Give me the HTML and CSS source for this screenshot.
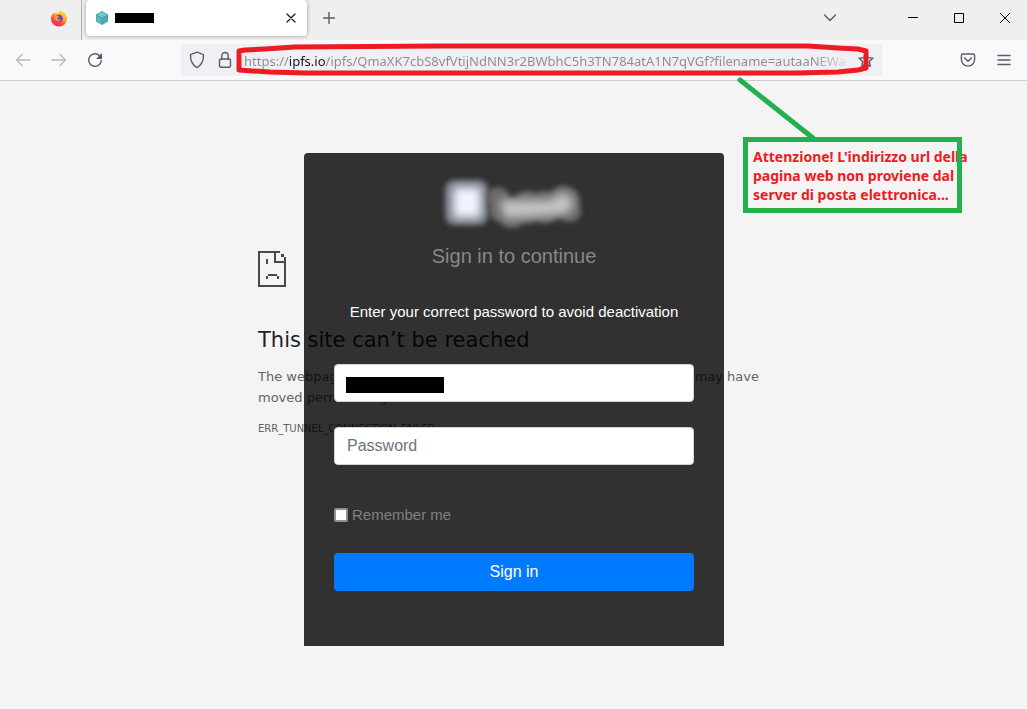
FILE: index.html
```
<!DOCTYPE html>
<html lang="en">
<head>
<meta charset="utf-8">
<title>Browser window</title>
<link rel="stylesheet" href="styles.css">
</head>
<body>
<header class="browser">
  <div class="tabbar">
    <div class="pinned">
      <svg width="18" height="18" viewBox="0 0 18 18" aria-hidden="true">
        <defs>
          <linearGradient id="fire" x1="0.8" y1="0" x2="0.25" y2="1">
            <stop offset="0" stop-color="#fff04a"/><stop offset="0.4" stop-color="#ffa726"/><stop offset="0.7" stop-color="#ff4a3d"/><stop offset="1" stop-color="#ec1675"/>
          </linearGradient>
        </defs>
        <path fill="url(#fire)" d="M10.5 1c.3 1.300 1.200 1.900 2 2.700.3-.4.300-.8.200-1.300C15.500 4 17 6.600 17 9.500A8 8 0 0 1 1 9.700C1 7.800 1.500 6 2.600 4.500l.3 1C3.200 4.400 3.900 3.500 4.800 3l.3 1.800c1-.5 2.200-.6 3.300-.3C8.600 3.100 9.300 1.900 10.500 1z"/>
        <circle cx="9" cy="9.500" r="3.800" fill="#7a3ae0"/>
        <path fill="#ff9b2d" d="M4.500 6.500c1.500-.6 2.500 0 3.200.8l1.500.2c0 .9-1.700 1-1.900 2 .3 1.500 2.700 1.800 4 .7-1 2.500-5 2.900-6.500.3-.7-1.200-.8-2.600-.3-4z"/>
      </svg>
    </div>
    <div class="tab">
      <svg width="14" height="16" viewBox="0 0 14 16" aria-hidden="true">
        <path fill="#469ea2" d="M7 1l6 3.500v7L7 15l-6-3.500v-7z"/>
        <path fill="#6acad1" d="M7 1.800l5.200 3L7 7.800l-5.200-3z"/>
        <path fill="#58b8be" d="M1.600 5.700l4.900 2.800v5.400l-4.900-2.800z"/>
        <path fill="#4fabb0" d="M12.400 5.700L7.500 8.500v5.400l4.900-2.800z"/>
      </svg>
      <span class="redacted-title"></span>
      <button class="icon-btn tab-close" aria-label="Close tab"><svg width="10" height="10" viewBox="0 0 10 10"><path d="M1 1l8 8M9 1L1 9"/></svg></button>
    </div>
    <button class="icon-btn new-tab" aria-label="New tab"><svg width="12" height="12" viewBox="0 0 12 12"><path d="M6 .5v11M.5 6h11"/></svg></button>
    <button class="icon-btn all-tabs" aria-label="List all tabs"><svg width="14" height="8" viewBox="0 0 14 8"><path d="M1.500 1L7 6.500 12.500 1"/></svg></button>
    <button class="win-btn" aria-label="Minimize"><svg width="10" height="10" viewBox="0 0 10 10"><path d="M0 4.500h10"/></svg></button>
    <button class="win-btn" aria-label="Maximize"><svg width="10" height="10" viewBox="0 0 10 10"><path d="M.5.5h9v9h-9z"/></svg></button>
    <button class="win-btn" aria-label="Close"><svg width="10" height="10" viewBox="0 0 10 10"><path d="M0 0l10 10M10 0L0 10"/></svg></button>
  </div>
  <div class="toolbar">
    <nav class="nav">
      <button class="icon-btn nav-btn" disabled aria-label="Back"><svg width="16" height="16" viewBox="0 0 16 16"><path d="M15 8H1.500M7 2.500L1.500 8 7 13.500"/></svg></button>
      <button class="icon-btn nav-btn" disabled aria-label="Forward"><svg width="16" height="16" viewBox="0 0 16 16"><path d="M1 8h13.500M9 2.500L14.500 8 9 13.500"/></svg></button>
      <button class="icon-btn nav-btn" aria-label="Reload"><svg width="16" height="16" viewBox="0 0 16 16"><path d="M13.200 4.500A6.300 6.300 0 1 0 14.300 8.500"/><path class="solid" d="M15 1v6H9z"/></svg></button>
    </nav>
    <div class="urlbar">
      <svg width="16" height="18" viewBox="0 0 16 18" aria-hidden="true"><path d="M8 1.200L14.500 3.600C14.700 9.500 12.800 14 8 16.700 3.200 14 1.300 9.500 1.500 3.600z"/></svg>
      <svg width="14" height="18" viewBox="0 0 14 18" aria-hidden="true"><rect x="1.500" y="8" width="11" height="8.300" rx="1.500"/><path d="M3.800 8V4.700a3.200 3.200 0 0 1 6.400 0V8"/></svg>
      <input class="url" type="text" aria-label="Address" spellcheck="false" value="https://ipfs.io/ipfs/QmaXK7cbS8vfVtijNdNN3r2BWbhC5h3TN784atA1N7qVGf?filename=autaaNEWa">
      <button class="icon-btn star" aria-label="Bookmark"><svg width="16" height="16" viewBox="0 0 16 16"><path d="M8 1.200l2 4.400 4.900.6-3.600 3.200 1 4.900L8 11.800l-4.300 2.500 1-4.900L1.100 6.200 6 5.600z"/></svg></button>
    </div>
    <div class="actions">
      <button class="icon-btn" aria-label="Pocket"><svg width="16" height="16" viewBox="0 0 16 16"><path d="M2.700 2h10.600a1.300 1.300 0 0 1 1.300 1.300v4.200a6.600 6.600 0 0 1-13.200 0V3.300A1.300 1.300 0 0 1 2.700 2z"/><path d="M4.500 6L8 9.300 11.500 6"/></svg></button>
      <button class="icon-btn" aria-label="Menu"><svg width="14" height="14" viewBox="0 0 14 14"><path d="M1 2.500h12M1 7h12M1 11.500h12"/></svg></button>
    </div>
  </div>
</header>

<main class="page">
  <section class="error">
    <svg class="error-icon" width="29" height="36" viewBox="0 0 29 36" aria-hidden="true">
      <path class="frame" d="M22 1H1v34h26V6M17 1v10h10"/>
      <path class="dots" d="M23 3h3v3h-3zM8 8h2v5H8zM10 23h9v2h-9zM8 25h2v3H8zM19 25h2v3h-2z"/>
    </svg>
    <h1>This site can’t be reached</h1>
    <p class="split"><span>The webpage</span><span>may have</span></p>
    <p>moved permanently</p>
    <p class="code">ERR_TUNNEL_CONNECTION_FAILED</p>
  </section>

  <form class="card">
    <svg class="logo" width="150" height="60" viewBox="0 0 150 60" aria-hidden="true">
      <defs>
        <filter id="soft" x="-20%" y="-30%" width="140%" height="160%"><feGaussianBlur stdDeviation="2.500"/></filter>
        <filter id="core" x="-40%" y="-60%" width="180%" height="220%"><feGaussianBlur stdDeviation="5"/></filter>
      </defs>
      <rect x="6" y="6" width="43" height="45" rx="9" fill="#737983" filter="url(#soft)"/>
      <rect x="14" y="13" width="28" height="31" fill="#f0f4ff" filter="url(#core)"/>
      <g fill="#6a6a6a" filter="url(#soft)">
        <circle cx="59" cy="24" r="11"/><circle cx="73" cy="39" r="15"/><circle cx="62" cy="36" r="12"/>
        <circle cx="89" cy="33" r="16"/><circle cx="106" cy="33" r="16"/><circle cx="125" cy="28" r="16"/><circle cx="131" cy="37" r="11"/>
      </g>
      <path fill="#c4c4c4" filter="url(#core)" d="M60 26l52 0 10-8 12 6-2 14-12 3-54 4z"/>
    </svg>
    <h2>Sign in to continue</h2>
    <p class="hint">Enter your correct password to avoid deactivation</p>
    <div class="field">
      <input type="text" aria-label="Account">
      <span class="redacted-value"></span>
    </div>
    <div class="field">
      <input type="password" placeholder="Password" aria-label="Password">
    </div>
    <label class="remember"><input type="checkbox">Remember me</label>
    <button class="submit" type="button">Sign in</button>
  </form>
</main>

<svg class="marks" width="1027" height="220" viewBox="0 0 1027 220" aria-hidden="true">
  <path class="mark-red" d="M239 70V51L245 50 265 49 295 47 440 46H808L838 48 858 49 866 51V68L858 70 838 72 796 73H307L270 72 252 71Z"/>
  <path class="mark-green" d="M740 80L813 138"/>
</svg>
<aside class="note" lang="it">Attenzione! L'indirizzo url della<br>pagina web non proviene dal<br>server di posta elettronica...</aside>
</body>
</html>
```
FILE: styles.css
```
* { box-sizing: border-box; }

body {
  margin: 0;
  min-height: 100vh;
  display: flex;
  flex-direction: column;
  position: relative;
  background: #f4f4f4;
  font-family: "Liberation Sans", Arial, sans-serif;
}

h1, h2, p { margin: 0; font-weight: 400; }

svg { display: block; flex: none; }

/* Browser chrome */
.tabbar {
  display: flex;
  height: 40px;
  background: #efefef;
}

.pinned {
  width: 82px;
  padding: 9px 0 0 50px;
  border-right: 1px solid #b0b0b0;
}

.tab {
  display: flex;
  align-items: center;
  gap: 6px;
  width: 221px;
  height: 36px;
  margin-left: 4px;
  padding: 0 8px 0 9px;
  background: #fff;
  border-radius: 4px;
  box-shadow: 0 0 4px rgba(0, 0, 0, 0.35);
}

.redacted-title {
  width: 39px;
  height: 10px;
  background: #000;
}

.icon-btn,
.win-btn {
  display: flex;
  align-items: center;
  justify-content: center;
  padding: 0;
  border: 0;
  background: none;
}

.icon-btn { width: 24px; height: 36px; }

.icon-btn svg,
.win-btn svg,
.urlbar > svg {
  fill: none;
  stroke: #5b5b66;
  stroke-width: 1.4;
  stroke-linejoin: round;
  stroke-linecap: round;
}

.tab-close { width: 16px; margin-left: auto; }
.tab-close svg { stroke: #15141a; stroke-width: 1.2; }
.new-tab { margin-left: 10px; }
.all-tabs { margin: 0 48px 0 auto; }

.win-btn { width: 46px; height: 36px; }
.win-btn:last-child { width: 45px; }
.win-btn svg { stroke: #000; stroke-width: 1; stroke-linecap: butt; stroke-linejoin: miter; }

.toolbar {
  display: flex;
  align-items: center;
  height: 41px;
  background: #f9f9fb;
  border-bottom: 1px solid #ccc;
}

.nav {
  display: flex;
  gap: 12px;
  width: 181px;
  padding-left: 11px;
}

.nav-btn:disabled svg { stroke: #b9b9bf; }
.nav-btn .solid { fill: #5b5b66; stroke: none; }

.urlbar {
  display: flex;
  flex: 1;
  align-items: center;
  height: 32px;
  padding: 0 4px 0 8px;
  background: #f0f0f4;
  border-radius: 4px;
}

.urlbar > svg + svg { margin-left: 13px; }

.url {
  flex: 1;
  min-width: 0;
  margin: 0 2px 0 12px;
  padding: 2px 0 0;
  border: 0;
  outline: 0;
  font: 13px/20px "Noto Sans", "Open Sans", sans-serif;
  color: transparent;
  background: linear-gradient(90deg, #8a8a90 0 46px, #15141a 46px 81px, #8a8a90 81px calc(100% - 40px), transparent);
  -webkit-background-clip: text;
  background-clip: text;
}

.actions {
  display: flex;
  gap: 12px;
  width: 145px;
  padding-right: 11px;
  justify-content: flex-end;
}

/* Page: the sign-in card is stacked over the error text */
.page {
  display: grid;
  flex: 1;
  justify-items: center;
  align-items: start;
  padding: 72px 16px 72px 17px;
}

.error,
.card { grid-area: 1 / 1; }

.error {
  width: 100%;
  max-width: 512px;
  padding-top: 98px;
  font-family: "DejaVu Sans", sans-serif;
  font-size: 13px;
  line-height: 21px;
  color: #5f6368;
}

.frame { fill: none; stroke: #484848; stroke-width: 2; }
.dots { fill: #484848; }

.error h1 {
  margin: 38px 0 11px;
  font-size: 21px;
  line-height: 30px;
  color: #202124;
}

.split {
  display: flex;
  justify-content: space-between;
  padding-right: 11px;
}

.code { margin-top: 10px; font-size: 10px; }

.card {
  position: relative;
  width: 100%;
  max-width: 420px;
  padding: 21px 30px 55px;
  border-radius: 4px 4px 0 0;
  background: rgba(0, 0, 0, 0.8);
  text-align: center;
}

.logo { margin: 0 auto; }

.card h2 {
  margin: 7px 0 30px;
  font-size: 20px;
  line-height: 30px;
  color: #888;
}

.hint {
  margin-bottom: 41px;
  font-size: 15px;
  line-height: 22px;
  color: #fff;
}

.field { position: relative; margin-bottom: 25px; }

.field input {
  display: block;
  width: 100%;
  height: 38px;
  padding: 0 12px;
  border: 1px solid #ced4da;
  border-radius: 4px;
  background: #fff;
  font: 16px/24px "Liberation Sans", Arial, sans-serif;
  color: #495057;
}

.field input::placeholder { color: #6c757d; }

.redacted-value {
  position: absolute;
  left: 12px;
  top: 13px;
  width: 98px;
  height: 16px;
  background: #000;
}

.remember {
  display: flex;
  align-items: center;
  gap: 4px;
  margin: 40px 0 28px;
  font-size: 15px;
  line-height: 20px;
  color: #808080;
}

.remember input {
  appearance: none;
  width: 14px;
  height: 14px;
  margin: 0;
  border: 2px solid #8f8f9d;
  border-radius: 2px;
  background: #fff;
}

.submit {
  display: block;
  width: 100%;
  height: 38px;
  border: 0;
  border-radius: 4px;
  background: #007bff;
  font: 16px/24px "Liberation Sans", Arial, sans-serif;
  color: #fff;
}

/* Hand-drawn annotations over the window */
.marks {
  position: absolute;
  left: 0;
  top: 0;
  pointer-events: none;
  fill: none;
  stroke-width: 5;
  stroke-linejoin: round;
  stroke-linecap: round;
}

.mark-red { stroke: #ed1c24; }
.mark-green { stroke: #22b14c; }

.note {
  position: absolute;
  left: 743px;
  top: 137px;
  width: 219px;
  padding: 10px 0 9px 10px;
  font: 700 14px/19px "Noto Sans", "Open Sans", sans-serif;
  color: #ed1c24;
  white-space: nowrap;
}

.note::after {
  content: "";
  position: absolute;
  inset: 0;
  border: 5px solid #22b14c;
}
```
